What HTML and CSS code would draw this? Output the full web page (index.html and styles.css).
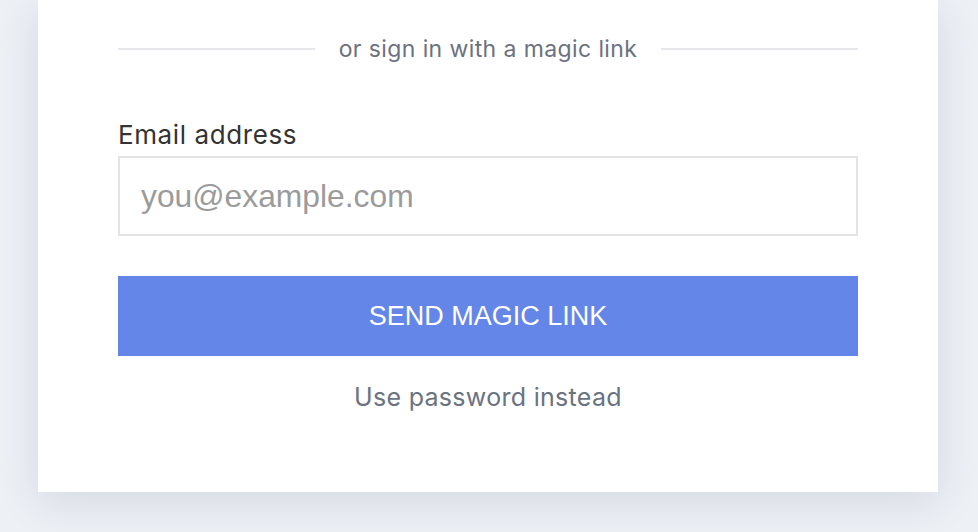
FILE: index.html
```html
<!DOCTYPE html>
<html lang="en">
<head>
    <meta charset="UTF-8">
    <meta name="viewport" content="width=device-width, initial-scale=1.0">
    <title>Sign in</title>
    <link rel="stylesheet" href="styles.css">
</head>
<body>
    <div class="card">
        <div class="divider">
            <span class="divider-line"></span>
            <span class="divider-text">or sign in with a magic link</span>
            <span class="divider-line"></span>
        </div>

        <form class="magic-form" onsubmit="return false">
            <label class="field-label" for="email">Email address</label>
            <input class="field-input" id="email" type="email" placeholder="you@example.com">
            <button class="send-btn" type="submit">SEND MAGIC LINK</button>
        </form>

        <a class="alt-link" href="#">Use password instead</a>
    </div>
</body>
</html>
```

FILE: styles.css
```css
body {
    margin: 0;
    background: #edf0f5;
    font-family: Inter, 'Liberation Sans', sans-serif;
    height: 532px;
    overflow: hidden;
}

.card {
    width: 740px;
    margin-left: 38px;
    padding: 34px 80px 80px;
    background: #ffffff;
    box-shadow: 0 10px 40px rgba(40, 55, 90, 0.12);
    display: flex;
    flex-direction: column;
}

.divider {
    display: flex;
    align-items: center;
    gap: 24px;
    height: 30px;
}

.divider-line {
    flex: 1;
    height: 2px;
    background: #e5e7eb;
}

.divider-text {
    color: #6b7280;
    font-size: 23px;
    letter-spacing: 0.4px;
}

.magic-form {
    display: flex;
    flex-direction: column;
    margin-top: 56px;
}

.field-label {
    color: #333333;
    font-size: 26px;
    letter-spacing: 0.6px;
    line-height: 30px;
    margin-bottom: 6px;
}

.field-input {
    box-sizing: border-box;
    height: 80px;
    width: 100%;
    border: 2px solid #e3e3e3;
    border-radius: 0;
    padding: 0 21px;
    font-family: 'Liberation Sans', Arial, sans-serif;
    font-size: 31.8px;
    color: #333;
    outline: none;
}

.field-input::placeholder {
    color: #9b9b9b;
}

.send-btn {
    margin-top: 40px;
    height: 80px;
    border: none;
    background: #6486e8;
    color: #ffffff;
    font-family: 'Liberation Sans', Arial, sans-serif;
    font-size: 27px;
    cursor: pointer;
}

.alt-link {
    margin-top: 26px;
    align-self: center;
    color: #6b7280;
    font-size: 25px;
    letter-spacing: 0.3px;
    line-height: 30px;
    text-decoration: none;
}
```
